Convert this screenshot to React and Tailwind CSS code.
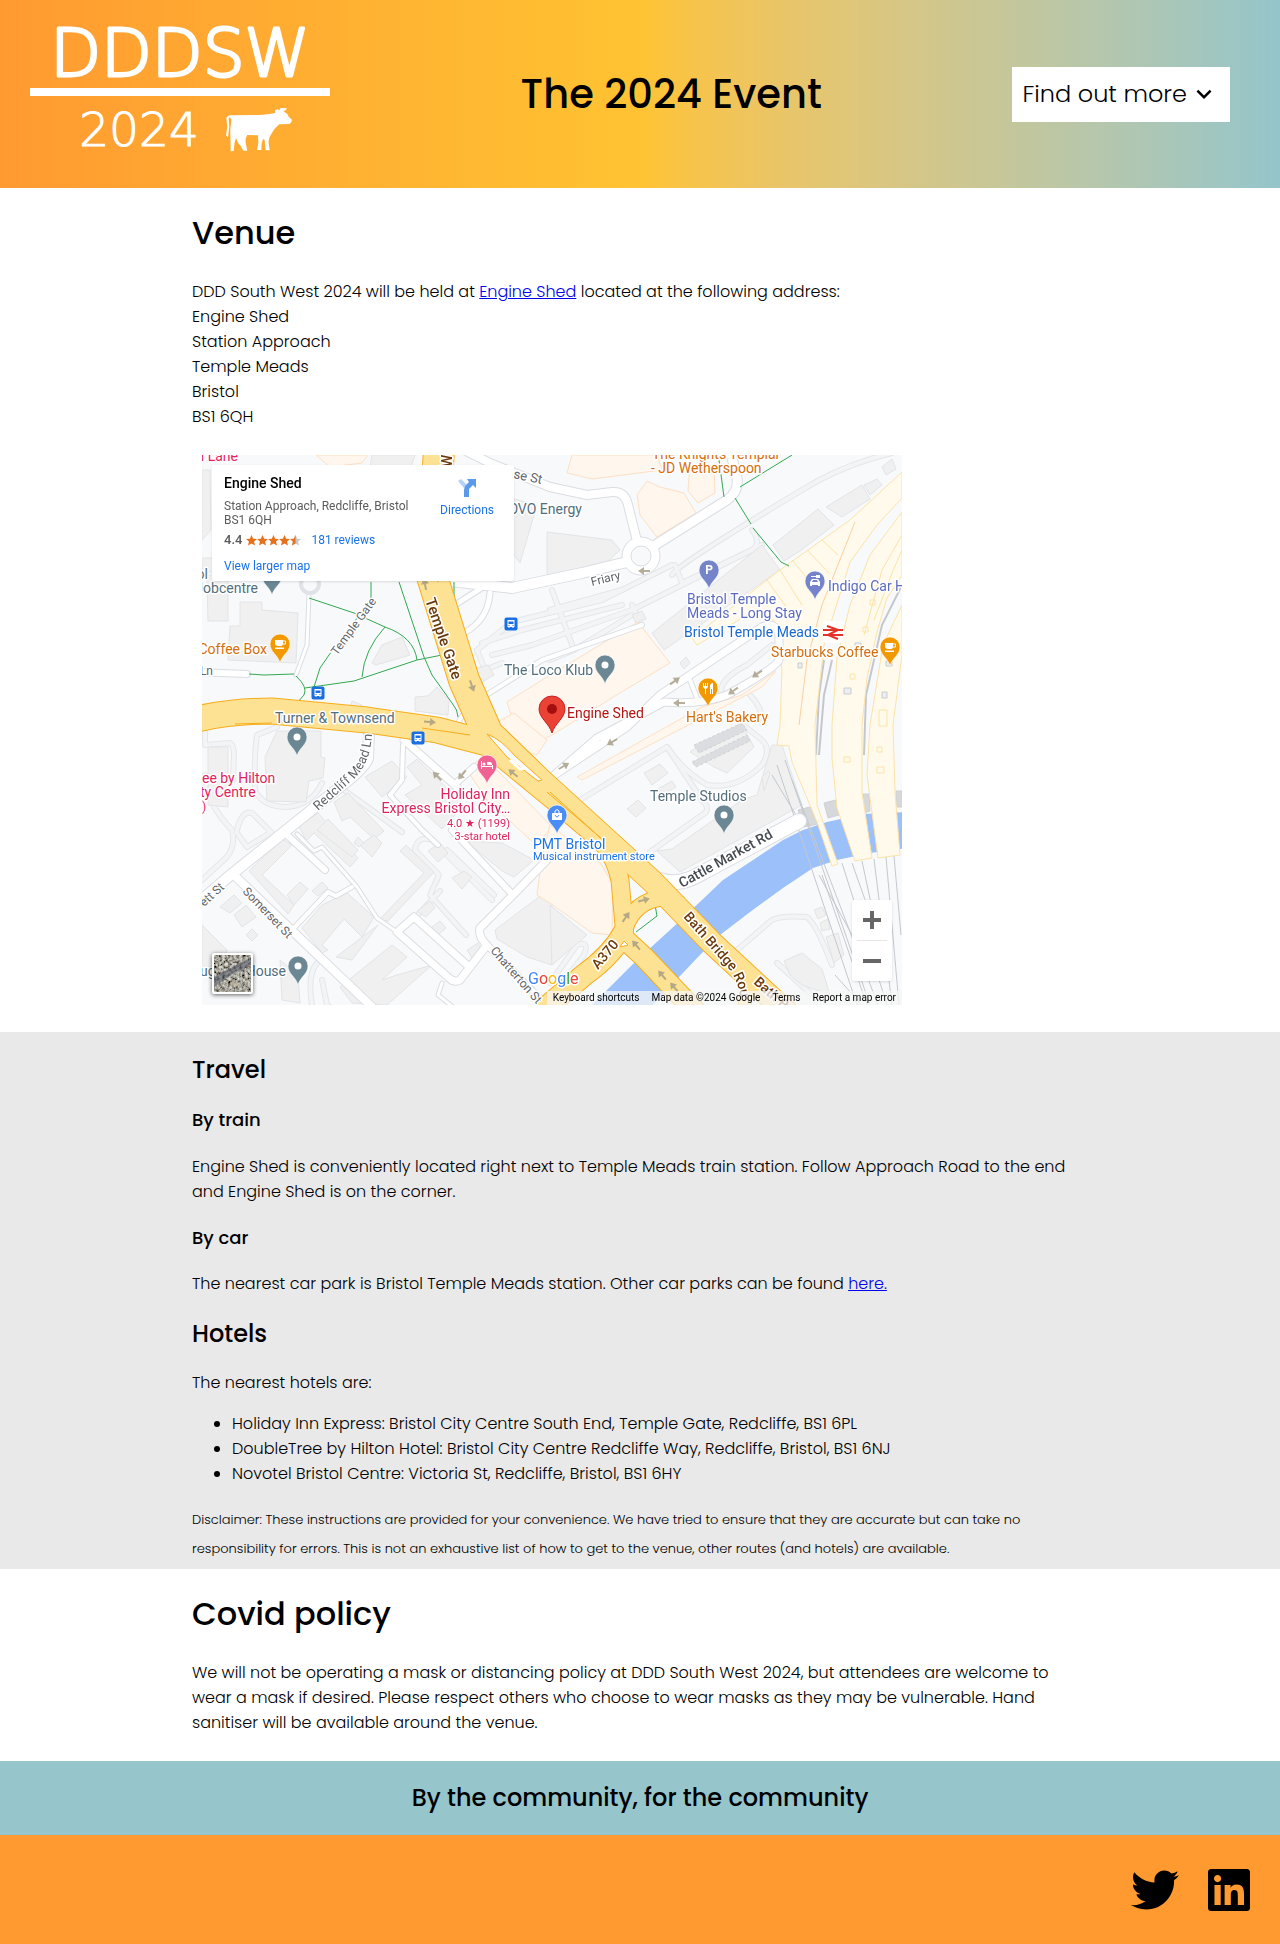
import { FaTwitter, FaLinkedin } from "react-icons/fa";
import { MdExpandMore } from "react-icons/md";

const MAJOR_ROADS = [
  { d: "M237 -5 L229 118 L262 225 L284 275", w: 30 },
  { d: "M-5 264 Q30 256 70 256 L165 265 L235 275 L300 292", w: 25 },
  { d: "M275 263 L338 324 L450 426 L510 488 L590 562", w: 22 },
  { d: "M283 290 L350 345 L395 383 Q412 398 418 425 L423 482", w: 17 },
  { d: "M423 476 Q410 500 382 520 L340 556", w: 21 },
  { d: "M423 474 Q432 446 460 443 L480 450", w: 15 },
  { d: "M418 480 L442 502 L495 558", w: 20 },
  { d: "M532 502 L545 530 L542 556", w: 12 },
];

const STREETS = [
  { d: "M262 -5 L290 9 L348 32 L385 40 L410 37 Q423 36 426 50 L435 86", w: 8 },
  { d: "M450 92 L525 45 Q537 37 535 23 L528 -5", w: 9 },
  { d: "M425 107 L380 118 L310 133 L248 126", w: 10 },
  { d: "M288 138 Q286 165 262 178", w: 5 },
  { d: "M245 155 L278 134", w: 5 },
  { d: "M167 277 L166 303 Q164 312 138 332 L25 423 L-5 449", w: 10 },
  { d: "M35 423 L170 552", w: 8 },
  { d: "M85 380 L123 415", w: 6 },
  { d: "M95 379 L112 396 L120 392 L155 432 L175 463 L195 477", w: 3 },
  { d: "M202 285 L255 332", w: 7 },
  { d: "M252 330 L272 312", w: 6 },
  { d: "M201 290 L200 325 L188 340 L220 375 L236 390", w: 4 },
  { d: "M250 375 L311 440", w: 6 },
  { d: "M345 405 L311 440 L278 473 Q276 482 285 490 L258 525 Q252 528 247 523 L195 477 L212 462 L265 510", w: 7 },
  { d: "M90 475 L126 437 L134 441 L150 432", w: 4 },
  { d: "M285 490 L350 556", w: 6 },
  { d: "M240 528 L236 540 L256 556", w: 3 },
  { d: "M345 325 L425 272 L458 240 L560 172 Q574 166 577 180 L577 205 Q575 212 525 240 Q500 250 462 247 L395 283 L350 322", w: 7 },
  { d: "M486 220 L495 243", w: 4 },
  { d: "M256 268 Q260 258 275 246 L340 205 L440 170", w: 4 },
  { d: "M458 425 Q476 432 500 418 L597 366", w: 14 },
  { d: "M-5 217 L45 219", w: 6 },
  { d: "M107 140 L105 190 L94 220", w: 3 },
];

const LANES = [
  "M3 270 L3 290 L28 288 Q32 290 32 300 L31 325",
  "M75 272 L55 280 Q52 300 53 335 Q60 352 85 352 Q110 350 120 328",
  "M3 320 Q5 350 30 375 Q34 390 25 402 L0 425",
  "M35 375 Q40 355 50 358 L70 378 M35 378 L45 392 L68 378",
  "M135 330 L200 377 M245 395 L292 440 M213 395 Q215 380 230 385 L290 445",
  "M213 395 L237 420 L228 440 L264 480 M210 466 L238 436",
  "M275 195 L310 167 L400 145 L470 110 M275 195 L283 215 L300 208",
  "M280 188 L320 175 L420 150 M290 200 L330 190 L430 155 L560 90",
  "M348 205 L372 195 L350 135 M372 195 L430 160 M430 150 L437 165",
  "M348 155 L420 135 M473 110 L480 128 L550 95 Q560 88 550 75",
  "M470 120 Q470 113 600 35 Q640 10 690 -2",
  "M378 345 L465 292 Q480 315 505 330 Q535 335 560 310 Q570 295 560 285 L535 265",
  "M465 292 L500 345 Q510 355 500 360 L448 397",
  "M520 240 Q515 225 545 210 L570 190 M548 240 Q562 255 560 268",
  "M535 495 L570 465 Q580 460 605 462 Q615 470 630 510 M575 508 L610 540",
  "M348 528 L375 490 Q388 485 382 500 L355 535",
  "M110 550 Q105 520 115 508 M120 525 L125 550 L140 560",
];

const BLOCKS = [
  "0,15 8,15 9,75 0,85", "0,103 11,103 11,117 0,117",
  "5,120 26,120 26,166 6,166", "38,147 60,147 60,155 96,158 94,208 26,205 28,171 38,171",
  "6,292 26,292 26,352 6,350", "63,302 75,276 119,276 119,302 123,303 121,323 107,326 104,347 65,346",
  "170,208 180,190 200,182 208,200 174,210", "150,246 160,250 157,260 147,257",
  "213,242 226,241 235,232 247,245 246,260 213,256", "252,220 286,210 292,220 258,240",
  "170,0 213,0 208,14 168,12", "312,44 335,50 318,108 309,96", "345,77 410,85 418,95 402,110 345,125",
  "163,322 190,306 205,322 180,342", "205,312 215,304 262,350 240,374 203,340 220,330",
  "132,347 146,338 182,376 172,384 148,362 140,366", "97,371 116,358 156,403 148,412 112,378 104,386",
  "47,416 80,384 90,390 60,420 92,450 86,459", "85,440 98,427 106,434 92,450",
  "110,436 120,427 126,433 116,441", "100,473 120,450 145,438 172,462 160,482 142,464 120,490 126,495 120,498",
  "134,502 176,470 150,505", "177,465 222,418 198,396 204,390 232,417 186,466",
  "158,390 172,380 180,388 170,402", "152,388 156,382 162,388 157,392",
  "226,396 238,388 246,398 236,407", "250,423 262,416 270,422 260,434", "215,456 228,446 233,453 224,462",
  "230,472 238,466 244,473 236,480", "264,386 300,388 332,405 312,422 300,416", "293,475 350,432 350,510 325,502 295,484",
  "138,532 190,490 205,502 180,525 195,520 230,510 185,550 150,548", "265,495 276,488 280,496 270,503",
  "18,452 32,440 40,448 28,458", "32,460 44,450 54,462 40,472", "0,470 25,495 20,510 0,512", "44,480 50,474 56,480 50,486",
  "78,505 96,520 98,548 80,545", "115,375 126,364 156,395 150,402",
  "571,90 616,54 632,70 598,96 582,106", "624,52 660,30 668,44 640,62", "662,30 675,24 680,30 668,40",
  "450,178 560,90 578,115 462,195", "478,208 484,202 488,208 482,214", "430,160 440,156 444,164 434,168",
  "442,318 458,309 466,318 450,330", "456,334 470,326 474,332 460,340", "425,354 436,345 444,353 434,362",
  "488,297 498,290 540,270 552,292 525,318 512,312", "455,396 470,394 540,345 555,340 570,290 580,290 600,350 478,417",
  "560,322 566,316 568,318 562,336", "582,506 600,498 620,514 628,540 600,530 588,520",
  "612,455 620,452 624,460 616,464", "618,468 626,464 628,474 620,476", "624,482 636,478 642,500 632,508",
  "348,450 385,480 350,510", "680,12 690,4 694,14 684,20", "684,32 690,26 696,32 690,38",
];

const SHOPS = [
  "370,0 455,0 460,15 390,24 365,18", "114,0 166,0 160,8 128,12", "435,40 445,26 458,32 482,38 494,58 455,82 438,60",
  "488,8 500,14 512,10 513,38 496,48 486,36", "305,247 340,225 436,167 468,208 418,238 350,280 330,290 312,270",
  "290,270 312,258 345,285 335,300 298,288", "265,315 280,302 298,318 350,372 334,390 285,345",
  "340,402 348,370 400,410 411,430 410,480 390,478 348,448 335,440", "500,252 540,240 574,216 560,232 380,325 375,322",
];

const PLATFORMS = [
  "M700 17 L648 65 L578 115 L490 183 L495 190 L545 160 L572 165 L580 215 L578 270 L575 290 L587 291 L590 307 L615 367 L630 411 L636 409 L615 350 L613 270 L622 190 L648 107 L675 70 L700 43Z",
  "M700 57 L668 100 L648 150 L635 203 L630 270 L630 303 L635 353 L653 406 L670 403 L660 337 L660 270 L665 223 L675 177 L685 143 L700 120Z",
  "M700 150 L681 190 L668 270 L665 320 L676 403 L698 400 L693 337 L691 270 L700 200Z",
];

const ARROWS = [
  [223, 129, -100], [270, 231, 70], [228, 267, 5], [311, 318, -140], [235, 321, -135], [260, 320, 130],
  [424, 462, -55], [442, 445, -15], [434, 490, -130], [460, 520, -130], [472, 532, -130],
  [442, 116, 180], [473, 226, -35], [555, 219, 145], [531, 236, 145], [477, 248, 180], [362, 311, -30], [410, 287, 150],
];

const LABELS = [
  { t: "l Lane", x: 36, y: 6, c: "#e91e63", a: "end" },
  { t: "OVO Energy", x: 380, y: 59, c: "#546e7a", a: "end" },
  { t: "ol", x: 6, y: 124, c: "#546e7a", a: "end" },
  { t: "Jobcentre", x: 56, y: 138, c: "#546e7a", a: "end" },
  { t: "Coffee Box", x: 65, y: 199, c: "#d56e0c", a: "end" },
  { t: "Ln", x: 11, y: 220, c: "#5f6368", a: "end", s: 12 },
  { t: "Turner & Townsend", x: 73, y: 268, c: "#546e7a" },
  { t: "The Loco Klub", x: 302, y: 220, c: "#546e7a" },
  { t: "Engine Shed", x: 365, y: 263, c: "#b31412" },
  { t: "Hart's Bakery", x: 484, y: 267, c: "#d56e0c" },
  { t: "Starbucks Coffee", x: 569, y: 202, c: "#d56e0c" },
  { t: "Bristol Temple Meads", x: 482, y: 182, c: "#1967d2" },
  { t: "Bristol Temple", x: 485, y: 149, c: "#5c6bc0" },
  { t: "Meads - Long Stay", x: 485, y: 163, c: "#5c6bc0" },
  { t: "Indigo Car Hire", x: 626, y: 136, c: "#5c6bc0" },
  { t: "The Knights Templar", x: 450, y: 4, c: "#d56e0c" },
  { t: "- JD Wetherspoon", x: 449, y: 18, c: "#d56e0c" },
  { t: "ee by Hilton", x: 0, y: 328, c: "#e0245e" },
  { t: "ty Centre", x: -2, y: 342, c: "#e0245e" },
  { t: ")", x: 0, y: 356, c: "#e0245e", s: 12 },
  { t: "Holiday Inn", x: 308, y: 344, c: "#e0245e", a: "end" },
  { t: "Express Bristol City…", x: 308, y: 358, c: "#e0245e", a: "end" },
  { t: "4.0 ★ (1199)", x: 308, y: 372, c: "#e0245e", a: "end", s: 11 },
  { t: "3-star hotel", x: 308, y: 385, c: "#e0245e", a: "end", s: 11 },
  { t: "PMT Bristol", x: 331, y: 394, c: "#1a73e8" },
  { t: "Musical instrument store", x: 331, y: 405, c: "#1a73e8", s: 11 },
  { t: "Temple Studios", x: 448, y: 346, c: "#546e7a" },
  { t: "ug", x: -2, y: 521, c: "#546e7a" },
  { t: "House", x: 84, y: 521, c: "#546e7a", a: "end" },
  { t: "se St", x: 311, y: 23, c: "#5f6368", r: 12, s: 13 },
  { t: "Temple Gate", x: 135, y: 201, c: "#5f6368", r: -54, s: 12 },
  { t: "Temple Gate", x: 223, y: 145, c: "#6b3a0c", r: 71, s: 15, w: 500 },
  { t: "Friary", x: 390, y: 131, c: "#5f6368", r: -14, s: 12 },
  { t: "Cattle Market Rd", x: 480, y: 433, c: "#444a50", r: -29, s: 14, w: 500 },
  { t: "Somerset St", x: 40, y: 437, c: "#5f6368", r: 46, s: 12 },
  { t: "ett St", x: 2, y: 452, c: "#5f6368", r: -42, s: 12 },
  { t: "Chatterton St", x: 288, y: 496, c: "#5f6368", r: 49, s: 12 },
  { t: "A370", x: 396, y: 515, c: "#6b3a0c", r: -50, s: 14, w: 500 },
  { t: "Bath B", x: 551, y: 528, c: "#6b3a0c", r: 42, s: 14, w: 500 },
  { t: "W", x: 250, y: 12, c: "#6b3a0c", r: -90, s: 14, w: 500 },
];

function Pin({ x, y, color, children }) {
  return (
    <g transform={`translate(${x} ${y})`}>
      <path d="M0 0 C-2 -8 -10 -11 -10 -19 A10 10 0 1 1 10 -19 C10 -11 2 -8 0 0Z" fill={color} stroke="#fff" strokeOpacity=".6" />
      <g transform="translate(0 -19)" fill="#fff">{children || <circle r="3.5" />}</g>
    </g>
  );
}

function Cup() {
  return (
    <>
      <path d="M-5 -4 H3 V0 Q3 2 1 2 H-2 Q-5 2 -5 -1Z M-5 3.5 H4 V5 H-5Z" />
      <path d="M3 -3 H5.500 V0 H3" fill="none" stroke="#fff" />
    </>
  );
}

function Bus({ x, y }) {
  return (
    <g transform={`translate(${x} ${y})`}>
      <rect x="-6.5" y="-6.5" width="13" height="13" rx="2" fill="#1a6fe3" />
      <path d="M-3.500 -4 H3.500 V3 H2.500 V4 H1.500 V3 H-1.500 V4 H-2.500 V3 H-3.500Z" fill="#fff" />
      <path d="M-2.500 -2.500 H2.500 V0 H-2.500Z M-2.500 1 H-1.500 V2 H-2.500Z M1.500 1 H2.500 V2 H1.500Z" fill="#1a6fe3" />
    </g>
  );
}

function MapDrawing() {
  return (
    <svg viewBox="0 0 700 550" className="block w-full" role="img" aria-label="Map of the area around Engine Shed, Bristol" fontFamily="Roboto, sans-serif">
      <rect width="700" height="550" fill="#f8f9fb" />
      <path d="M385 555 L433 507 L480 464 L521 425 L548 407 L581 385 L601 375 L625 367 L661 359 L705 357 V393 L668 398 L635 405 L611 413 L581 433 L548 457 L518 480 L495 503 L446 555Z" fill="#9cc0f9" />
      <g fill="none" stroke="#e4e7ea" strokeWidth="6" strokeLinejoin="round" strokeLinecap="round">
        {LANES.map((d) => <path key={d} d={d} />)}
      </g>
      <g fill="none" stroke="#f3f4f6" strokeWidth="4" strokeLinejoin="round" strokeLinecap="round">
        {LANES.map((d) => <path key={d} d={d} />)}
      </g>
      <g fill="#f0f0f0" stroke="#e3e4e6">
        {BLOCKS.map((p) => <polygon key={p} points={p} />)}
      </g>
      <g fill="#fff6ee" stroke="#fde0c2">
        {SHOPS.map((p) => <polygon key={p} points={p} />)}
      </g>
      <g fill="#dcdde0" stroke="#cfd1d4">
        <path d="M492 290 L540 268 L545 275 L497 298Z M490 307 L545 280 L548 286 L494 312Z" strokeDasharray="3 2" />
        <path d="M596 355 L608 352 L616 369 L602 372Z M622 348 L634 345 L637 360 L626 363Z M661 339 L667 339 L668 356 L662 358Z M694 336 H700 V352 H695Z" fill="#d7d8da" />
      </g>
      <g fill="none" stroke="#c4c8cd">
        <path d="M575 310 L655 550 M583 305 L668 550 M590 325 L676 550 M617 420 L650 480 M620 420 L665 550 M640 408 L685 550 M650 408 L672 470 M660 406 L680 500 M672 404 L690 550 M684 402 L697 550 M692 401 L699 480 M570 320 L600 370 M633 520 L660 550" />
        <path d="M614 300 L617 240 L622 205 M617 300 L622 240 L630 205 M662 300 L664 240 L680 170 L700 130" strokeWidth="2" />
      </g>
      <g fill="#fffaec" stroke="#fce3a8">
        {PLATFORMS.map((d) => <path key={d} d={d} />)}
      </g>
      <g fill="none" stroke="#fce3a8">
        <path d="M653 67 L620 150 L605 205 L597 270" stroke="#fbcf9f" />
        <path d="M578 115 L600 150 M590 105 L615 135 M605 95 L627 118 M620 85 L636 100 M565 125 L590 160 M700 80 L680 115 L662 180 M700 95 L690 118 L672 165 M674 130 h5 v5 h-5z M668 145 h5 v5 h-5z M661 172 h5 v5 h-5z M648 219 h5 v5 h-5z M677 255 h8 v16 h-8z M675 292 h5 v5 h-5z M642 302 h6 v5 h-6z M675 312 h7 v6 h-7z" />
      </g>
      <g fill="#eceef0" stroke="#c9ccd0">
        <path d="M642 233 h7 v6 h-7z M680 237 h5 v6 h-5z M653 188 h6 v7 h-6z M684 206 h6 v5 h-6z M596 208 h4 v5 h-4z" />
      </g>
      <g fill="none" stroke="#dadde2" strokeLinejoin="round" strokeLinecap="round">
        {STREETS.map(({ d, w }) => <path key={d} d={d} strokeWidth={w + 2} />)}
      </g>
      <circle cx="439" cy="101" r="19" fill="#fff" stroke="#dadde2" />
      <g fill="none" stroke="#fff" strokeLinejoin="round" strokeLinecap="round">
        {STREETS.map(({ d, w }) => <path key={d} d={d} strokeWidth={w} />)}
      </g>
      <circle cx="439" cy="101" r="10" fill="#f8f9fb" stroke="#dadde2" />
      <circle cx="108" cy="129" r="9" fill="#f8f9fb" stroke="#dfe2e6" strokeWidth="4" />
      <g fill="none" stroke="#34a853" strokeWidth="1">
        <path d="M107 143 L152 158 L183 172 Q212 182 215 205 M183 172 Q162 195 160 222 M169 127 V145 L127 200 L118 213 L112 232 M103 233 L152 226 L215 205 L240 200 M197 127 L222 202 L230 220 L250 248 Q256 255 256 262 M47 219 L62 220 L92 219 M94 221 Q106 232 102 240 L95 248 M252 127 V143" />
        <path d="M517 5 L522 42 M538 32 L590 0 M533 43 L549 69 M551 73 L579 107 L587 111 M423 412 L428 412 L448 432 L450 437 M453 450 L455 461 L434 477" />
      </g>
      <g fill="none" stroke="#f6ad1b" strokeLinejoin="round">
        {MAJOR_ROADS.map(({ d, w }) => <path key={d} d={d} strokeWidth={w + 2} />)}
      </g>
      <g fill="none" stroke="#fde293" strokeLinejoin="round">
        {MAJOR_ROADS.map(({ d, w }) => <path key={d} d={d} strokeWidth={w} />)}
      </g>
      <path d="M285 279 Q300 285 312 300 L340 325 L336 326 L305 302Z" fill="#f8f9fb" stroke="#f6ad1b" />
      <path d="M308 305 L318 314 L324 313" fill="none" stroke="#fff" strokeWidth="3" />
      <path d="M345 337 L400 384 M348 337 L404 388 M220 273 L268 280 M240 0 L232 110 L236 127 M33 269 L70 268" fill="none" stroke="#f6ad1b" />
      <path d="M418 492 L426 490 L422 486Z" fill="#fff" stroke="#f6ad1b" />
      <g fill="#a39a83" opacity=".8">
        {ARROWS.map(([x, y, r]) => (
          <path key={`${x}-${y}`} d="M-6 -1 H0 V-4 L6 0 L0 4 V1 H-6Z" transform={`translate(${x} ${y}) rotate(${r})`} />
        ))}
      </g>
      <Bus x={116} y={238} />
      <Bus x={309} y={169} />
      <Bus x={216} y={283} />
      <Pin x={70} y={140} color="#6b8794" />
      <Pin x={78} y={208} color="#f29900"><Cup /></Pin>
      <Pin x={95} y={301} color="#6b8794" />
      <Pin x={403} y={229} color="#6b8794" />
      <Pin x={522} y={379} color="#6b8794" />
      <Pin x={96} y={530} color="#6b8794" />
      <Pin x={507} y={134} color="#7584ca"><text y="4" fontSize="12" fontWeight="700" textAnchor="middle">P</text></Pin>
      <Pin x={613} y={145} color="#7584ca">
        <path d="M-5 5 V1 L-3 -2 H3 L5 1 V5 H3 V4 H-3 V5Z M-4 -5 H1 V-6 H5 V-3 H1 V-4 H-4Z" />
        <path d="M-3 1 L-2 -1 H2 L3 1Z" fill="#7584ca" />
      </Pin>
      <Pin x={688} y={211} color="#f29900"><Cup /></Pin>
      <Pin x={506} y={252} color="#f29900">
        <path d="M-5 -5 H-4 V-2 H-3 V-5 H-2 V-2 H-1 V-5 H0 V-1 L-2 1 V6 H-3 V1 L-5 -1Z M2 6 V-3 Q3 -5 5 -5 V6 H4 V1 H3 V6Z" />
      </Pin>
      <Pin x={285} y={329} color="#f06292">
        <path d="M-6 -4 H-5 V1 H5 V-1 Q5 -3 3 -3 H0 V0 H-1 H6 V4 H5 V2 H-5 V4 H-6Z" />
        <circle cx="-3" cy="-1" r="1.500" />
      </Pin>
      <Pin x={355} y={379} color="#4b8df8">
        <path d="M-5 -2 H5 V5 H-5Z" />
        <path d="M-2 -2 V-4 Q0 -7 2 -4 V-2" fill="none" stroke="#fff" />
        <path d="M-2 0 Q0 4 2 0" fill="none" stroke="#4b8df8" />
      </Pin>
      <path d="M350 278 C347 268 337 263 337 254 A13 13 0 1 1 363 254 C363 263 353 268 350 278Z" fill="#ea4335" stroke="#c5221f" />
      <circle cx="350" cy="254" r="5" fill="#a50e0e" />
      <rect x="621" y="166" width="21" height="22" rx="3" fill="#fff" />
      <path d="M621 175 H641 M621 180 H641 M625 171 L636 175 L626 180 L636 184" fill="none" stroke="#e5332a" strokeWidth="2" />
      <g stroke="#fff" strokeWidth="3" strokeLinejoin="round" paintOrder="stroke">
        {LABELS.map((l) => (
          <text key={`${l.t}${l.x}`} transform={`translate(${l.x} ${l.y}) rotate(${l.r || 0})`} fill={l.c} fontSize={l.s || 14} fontWeight={l.w || 400} textAnchor={l.a || "start"}>
            {l.t}
          </text>
        ))}
        <path id="mead-lane" d="M116 356 L152 324 Q170 306 170 275" fill="none" stroke="none" />
        <text fill="#5f6368" fontSize="13"><textPath href="#mead-lane">Redcliff Mead Ln</textPath></text>
        <path id="bath-bridge" d="M481 462 L527 514 Q539 530 541 560" fill="none" stroke="none" />
        <text fill="#6b3a0c" fontSize="14" fontWeight="500"><textPath href="#bath-bridge">Bath Bridge Rou</textPath></text>
        <text x="326" y="529" fontSize="16">
          <tspan fill="#4285f4">G</tspan><tspan fill="#ea4335">o</tspan><tspan fill="#fbbc04">o</tspan><tspan fill="#4285f4">g</tspan><tspan fill="#34a853">l</tspan><tspan fill="#ea4335">e</tspan>
        </text>
      </g>
    </svg>
  );
}

function Star({ half }) {
  const d = "M6 0 L7.800 4 L12 4.400 L8.800 7.200 L9.800 11.500 L6 9.200 L2.200 11.500 L3.200 7.200 L0 4.400 L4.200 4Z";
  return (
    <svg viewBox="0 0 12 12" className="size-[11px]">
      <path d={d} fill={half ? "#c7c7c7" : "#e7711b"} />
      {half && <path d="M6 0 V9.200 L2.200 11.500 L3.200 7.200 L0 4.400 L4.200 4Z" fill="#e7711b" />}
    </svg>
  );
}

function PlaceCard() {
  return (
    <div className="absolute top-[10px] left-[10px] flex w-[302px] justify-between rounded-xs bg-white pt-[10px] pr-5 pb-2 pl-3 text-xs leading-[14px] text-[#5b5b5b] shadow">
      <div>
        <p className="pb-2 text-sm leading-4 font-medium text-black">Engine Shed</p>
        <p>Station Approach, Redcliffe, Bristol<br />BS1 6QH</p>
        <div className="flex items-center py-1.5">
          <span className="mr-1 text-[13px] font-medium">4.4</span>
          <Star /><Star /><Star /><Star /><Star half />
          <a href="#reviews" className="ml-[10px] text-[#1a73e8]">181 reviews</a>
        </div>
        <a href="#map" className="mt-1.5 block text-[#1a73e8]">View larger map</a>
      </div>
      <a href="#directions" className="flex flex-col items-center gap-1.5 pt-1 text-[#1a73e8]">
        <svg viewBox="0 0 18 18" className="size-[18px]">
          <path d="M0 2 L3 0 L9 6 L6 9Z" fill="#b4d1f7" />
          <path d="M6 18 V11 Q6 8 8 6 L11 3 L9 0 H18 V9 L15 6 L11 10 V18Z" fill="#5b9ae8" />
        </svg>
        Directions
      </a>
    </div>
  );
}

function MapEmbed() {
  return (
    <div className="relative mx-[10px] mt-[26px] w-[700px] max-w-[calc(100%-20px)] overflow-hidden font-[Roboto,sans-serif] font-normal">
      <MapDrawing />
      <PlaceCard />
      <button aria-label="Show satellite imagery" className="absolute bottom-[11px] left-[10px] size-[41px] rounded-xs border-2 border-white bg-[#66675f] shadow-[0_1px_4px_rgba(0,0,0,0.6)]">
        <svg viewBox="0 0 37 37" className="size-full">
          <filter id="aerial">
            <feTurbulence type="fractalNoise" baseFrequency=".35" numOctaves="3" seed="4" />
            <feColorMatrix values="1.300 0 0 0 -.28  1.300 0 0 0 -.29  1.200 0 0 0 -.28  0 0 0 0 1" />
          </filter>
          <rect width="37" height="37" filter="url(#aerial)" />
          <path d="M0 22 L22 10 L37 3 V10 L20 18 L0 32Z" fill="#4c525d" opacity=".6" />
          <path d="M0 25 L37 6 M0 29 L37 9" stroke="#949aa3" strokeWidth="1" opacity=".5" />
          <path d="M14 31 L20 24 L27 31Z" fill="#b9ad94" opacity=".5" />
        </svg>
      </button>
      <div className="absolute right-[10px] bottom-6 flex w-10 flex-col items-center rounded-xs bg-white shadow">
        <button aria-label="Zoom in" className="flex h-10 w-full items-center justify-center">
          <svg viewBox="0 0 18 18" className="size-[18px]"><path d="M7 0 H11 V7 H18 V11 H11 V18 H7 V11 H0 V7 H7Z" fill="#666" /></svg>
        </button>
        <div className="h-px w-[30px] bg-[#e6e6e6]" />
        <button aria-label="Zoom out" className="flex h-10 w-full items-center justify-center">
          <svg viewBox="0 0 18 18" className="size-[18px]"><path d="M0 7 H18 V11 H0Z" fill="#666" /></svg>
        </button>
      </div>
      <div className="absolute right-0 bottom-0 flex h-[14px] items-center gap-[12px] bg-[#f5f5f5]/75 px-[6px] text-[10px] leading-[14px] whitespace-nowrap text-black">
        <button>Keyboard shortcuts</button>
        <span>Map data ©2024 Google</span>
        <a href="#terms">Terms</a>
        <a href="#report">Report a map error</a>
      </div>
    </div>
  );
}

function Logo() {
  return (
    <svg viewBox="30 24 300 140" className="w-[300px]" role="img" aria-label="DDDSW 2024" fill="#fff" fontFamily="DejaVu Sans, sans-serif">
      <text x="180" y="76" fontSize="66" textAnchor="middle" stroke="#fff" strokeWidth="3" strokeLinejoin="round">DDDSW</text>
      <rect x="30" y="88" width="300" height="8" />
      <text x="139" y="146" fontSize="47" textAnchor="middle" stroke="#fff" strokeWidth="1">2024</text>
      <path
        transform="scale(.33333)"
        d="M690 346 L770 345 Q810 343 826 338 L825 331 L832 327 L838 331 L842 324 L861 325 L857 331 L850 333 L862 342 L866 350 L876 359 L874 367 L868 372 L838 373 Q822 385 812 405 Q804 418 806 430 L809 451 L797 451 L794 420 L789 417 L785 430 L784 450 L771 450 L775 430 L774 406 L742 405 Q735 415 737 428 L742 452 L730 452 Q724 438 714 428 L708 414 Q701 430 702 453 L692 454 L691 390 L694 360 L690 352 L686 354 L688 380 L684 412 L678 406 L682 380 L679 354 Q682 346 690 346Z"
      />
    </svg>
  );
}

const HOTELS = [
  "Holiday Inn Express: Bristol City Centre South End, Temple Gate, Redcliffe, BS1 6PL",
  "DoubleTree by Hilton Hotel: Bristol City Centre Redcliffe Way, Redcliffe, Bristol, BS1 6NJ",
  "Novotel Bristol Centre: Victoria St, Redcliffe, Bristol, BS1 6HY",
];

const linkStyle = "text-[#0000ee] underline";

export default function App() {
  return (
    <div className="bg-white font-[Poppins,Inter,sans-serif] text-base leading-[25px] font-light text-black">
      <header className="flex h-[188px] items-center justify-between bg-linear-to-r from-[#ff9a31] via-[#ffc332] to-[#94c5cb] pr-[50px] pl-[30px]">
        <Logo />
        <h1 className="text-[40px] leading-[60px] font-medium">The 2024 Event</h1>
        <button className="flex h-[55px] items-center gap-0.5 bg-white pr-[11px] pl-[10px] text-2xl">
          Find out more
          <MdExpandMore className="size-[30px]" />
        </button>
      </header>

      <main>
        <section className="mx-auto w-[70%] pt-[21px] pb-[27px]">
          <h2 className="text-[32px] leading-[48px] font-medium">Venue</h2>
          <p className="mt-[22px]">
            DDD South West 2024 will be held at <a href="#engine-shed" className={linkStyle}>Engine Shed</a> located at the following address:
            <br />Engine Shed
            <br />Station Approach
            <br />Temple Meads
            <br />Bristol
            <br />BS1 6QH
          </p>
          <MapEmbed />
        </section>

        <section className="bg-[#e9e9e9]">
          <div className="mx-auto w-[70%] pt-5 pb-1.5">
            <h3 className="text-2xl leading-9 font-medium">Travel</h3>
            <h4 className="mt-[18px] text-lg leading-7 font-medium">By train</h4>
            <p className="mt-5">
              Engine Shed is conveniently located right next to Temple Meads train station. Follow Approach Road to the end and Engine Shed is on the corner.
            </p>
            <h4 className="mt-5 text-lg leading-7 font-medium">By car</h4>
            <p className="mt-[19px]">
              The nearest car park is Bristol Temple Meads station. Other car parks can be found <a href="#car-parks" className={linkStyle}>here.</a>
            </p>
            <h3 className="mt-5 text-2xl leading-9 font-medium">Hotels</h3>
            <p className="mt-[18px]">The nearest hotels are:</p>
            <ul className="mt-4 list-disc pl-10">
              {HOTELS.map((hotel) => <li key={hotel}>{hotel}</li>)}
            </ul>
            <p className="mt-[19px] text-[13px] leading-[29px]">
              Disclaimer: These instructions are provided for your convenience. We have tried to ensure that they are accurate but can take no responsibility for errors. This is not an exhaustive list of how to get to the venue, other routes (and hotels) are available.
            </p>
          </div>
        </section>

        <section className="mx-auto w-[70%] pt-[21px] pb-[26px]">
          <h2 className="text-[32px] leading-[48px] font-medium">Covid policy</h2>
          <p className="mt-[22px]">
            We will not be operating a mask or distancing policy at DDD South West 2024, but attendees are welcome to wear a mask if desired. Please respect others who choose to wear masks as they may be vulnerable. Hand sanitiser will be available around the venue.
          </p>
        </section>
      </main>

      <footer>
        <p className="bg-[#96c6cb] py-[19px] text-center text-2xl leading-9 font-medium">By the community, for the community</p>
        <div className="flex h-[109px] items-center justify-end gap-[26px] bg-[#ff9a31] pr-[27px]">
          <a href="#twitter" aria-label="Twitter"><FaTwitter className="size-12" /></a>
          <a href="#linkedin" aria-label="LinkedIn"><FaLinkedin className="size-12" /></a>
        </div>
      </footer>
    </div>
  );
}
